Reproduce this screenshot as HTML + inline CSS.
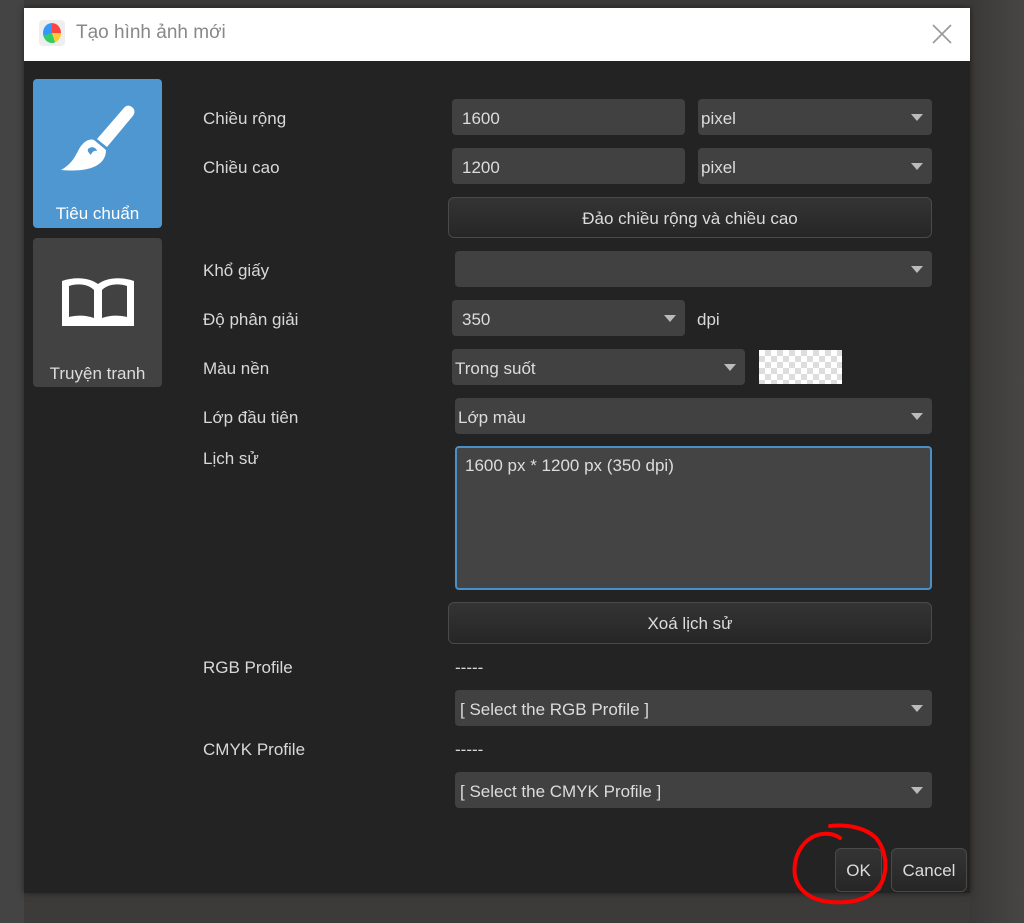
<!DOCTYPE html>
<html><head><meta charset="utf-8"><style>
*{margin:0;padding:0;box-sizing:border-box}
body{width:1024px;height:923px;overflow:hidden;background:#3c3b3a;font-family:"Liberation Sans","DejaVu Sans",sans-serif;position:relative;color:#d8d8d8;font-size:17px}
.a{position:absolute}
.dlg{left:24px;top:8px;width:946px;height:885px;background:#232323;box-shadow:0 0 6px rgba(0,0,0,.5)}
.title{left:24px;top:8px;width:946px;height:53px;background:#fff}
.f{position:absolute;background:#414141;border-radius:4px;height:36px;line-height:39px;padding-left:10px;color:#dcdcdc}
.arr{position:absolute;right:9px;top:15px;width:0;height:0;border-left:6px solid transparent;border-right:6px solid transparent;border-top:7px solid #bbb}
.btn{position:absolute;border:1px solid #4a4a4a;border-radius:6px;background:linear-gradient(#343434,#262626);text-align:center;color:#dcdcdc}
.lbl{position:absolute;left:203px;color:#d8d8d8}
</style></head><body>
<div class="a" style="left:0;top:0;width:24px;height:923px;background:#444"></div>
<div class="a" style="left:970px;top:0;width:54px;height:923px;background:linear-gradient(90deg,#3a3938,#474645)"></div>
<div class="a dlg"></div>
<div class="a title"></div>
<div class="a" style="left:39px;top:20px;width:26px;height:26px;border-radius:4px;background:#eee"></div>
<div class="a" style="left:43px;top:23px;width:18px;height:20px;border-radius:50%;background:conic-gradient(#f44 0 25%,#fc3 25% 45%,#3c6 45% 70%,#39f 70% 100%)"></div>
<div class="a" style="left:76px;top:22px;font-size:19px;color:#888">Tạo hình ảnh mới</div>
<svg class="a" style="left:932px;top:24px" width="20" height="20"><path d="M1 1L19 19M19 1L1 19" stroke="#999" stroke-width="1.6"/></svg>

<div class="a" style="left:33px;top:79px;width:129px;height:149px;background:#4e97d1;border-radius:4px"></div>
<svg class="a" style="left:58px;top:103px" width="80" height="75"><path d="M72 3 C77 5 78 10 74 14 L49 44 L39 36 L65 6 C67 3 70 2 72 3Z" fill="#fff"/><path d="M36 37 L48 47 C48 60 36 70 3 67 C12 62 16 56 20 48 C24 40 30 35 36 37Z" fill="#fff"/><path d="M30 46 C33 43 38 44 39 48 C36 47 34 49 33 52 C31 50 29 48 30 46Z" fill="#4e97d1"/></svg>
<div class="a" style="left:33px;top:204px;width:129px;text-align:center;color:#fff">Tiêu chuẩn</div>
<div class="a" style="left:33px;top:238px;width:129px;height:149px;background:#424242;border-radius:4px"></div>
<svg class="a" style="left:58px;top:274px" width="80" height="56"><path d="M4 7 C16 3 30 3 40 10 C50 3 64 3 76 7 L76 52 L4 52Z" fill="#fff"/><path d="M11 12 C20 9 30 10 36 16 L36 44 C28 41 19 41 11 43Z M44 16 C50 10 60 9 69 12 L69 43 C61 41 52 41 44 44Z" fill="#424242"/></svg>
<div class="a" style="left:33px;top:364px;width:129px;text-align:center;color:#ddd">Truyện tranh</div>

<div class="lbl" style="top:109px">Chiều rộng</div>
<div class="lbl" style="top:158px">Chiều cao</div>
<div class="lbl" style="top:261px">Khổ giấy</div>
<div class="lbl" style="top:310px">Độ phân giải</div>
<div class="lbl" style="top:359px">Màu nền</div>
<div class="lbl" style="top:408px">Lớp đầu tiên</div>
<div class="lbl" style="top:449px">Lịch sử</div>
<div class="lbl" style="top:658px">RGB Profile</div>
<div class="lbl" style="top:740px">CMYK Profile</div>

<div class="f" style="left:452px;top:99px;width:233px">1600</div>
<div class="f" style="left:698px;top:99px;width:234px;padding-left:3px">pixel<i class="arr"></i></div>
<div class="f" style="left:452px;top:148px;width:233px">1200</div>
<div class="f" style="left:698px;top:148px;width:234px;padding-left:3px">pixel<i class="arr"></i></div>
<div class="btn" style="left:448px;top:197px;width:484px;height:41px;line-height:41px">Đảo chiều rộng và chiều cao</div>
<div class="f" style="left:455px;top:251px;width:477px"><i class="arr"></i></div>
<div class="f" style="left:452px;top:300px;width:233px">350<i class="arr"></i></div>
<div class="a" style="left:697px;top:310px">dpi</div>
<div class="f" style="left:452px;top:349px;width:293px;padding-left:3px">Trong suốt<i class="arr"></i></div>
<div class="a" style="left:759px;top:350px;width:83px;height:34px;background-color:#fff;background-image:linear-gradient(45deg,#ddd 25%,transparent 25%,transparent 75%,#ddd 75%),linear-gradient(45deg,#ddd 25%,transparent 25%,transparent 75%,#ddd 75%);background-size:12px 12px;background-position:0 0,6px 6px"></div>
<div class="f" style="left:455px;top:398px;width:477px;padding-left:3px">Lớp màu<i class="arr"></i></div>
<div class="a" style="left:455px;top:446px;width:477px;height:144px;background:#444;border:2px solid #4a8fc6;border-radius:4px;padding:8px 8px;color:#ddd">1600 px * 1200 px (350 dpi)</div>
<div class="btn" style="left:448px;top:602px;width:484px;height:42px;line-height:42px">Xoá lịch sử</div>
<div class="a" style="left:455px;top:658px">-----</div>
<div class="f" style="left:455px;top:690px;width:477px;padding-left:5px">[ Select the RGB Profile ]<i class="arr"></i></div>
<div class="a" style="left:455px;top:740px">-----</div>
<div class="f" style="left:455px;top:772px;width:477px;padding-left:5px">[ Select the CMYK Profile ]<i class="arr"></i></div>
<div class="btn" style="left:835px;top:848px;width:47px;height:44px;line-height:43px">OK</div>
<div class="btn" style="left:891px;top:848px;width:76px;height:44px;line-height:43px">Cancel</div>
<svg class="a" style="left:790px;top:822px" width="105" height="85"><path d="M40 4 C58 2 76 6 86 16 C96 28 98 46 92 60 C84 76 64 82 40 80 C20 78 8 68 5 54 C3 40 8 26 18 18 C28 10 42 10 50 16" fill="none" stroke="#f00" stroke-width="4" stroke-linecap="round"/></svg>
</body></html>
